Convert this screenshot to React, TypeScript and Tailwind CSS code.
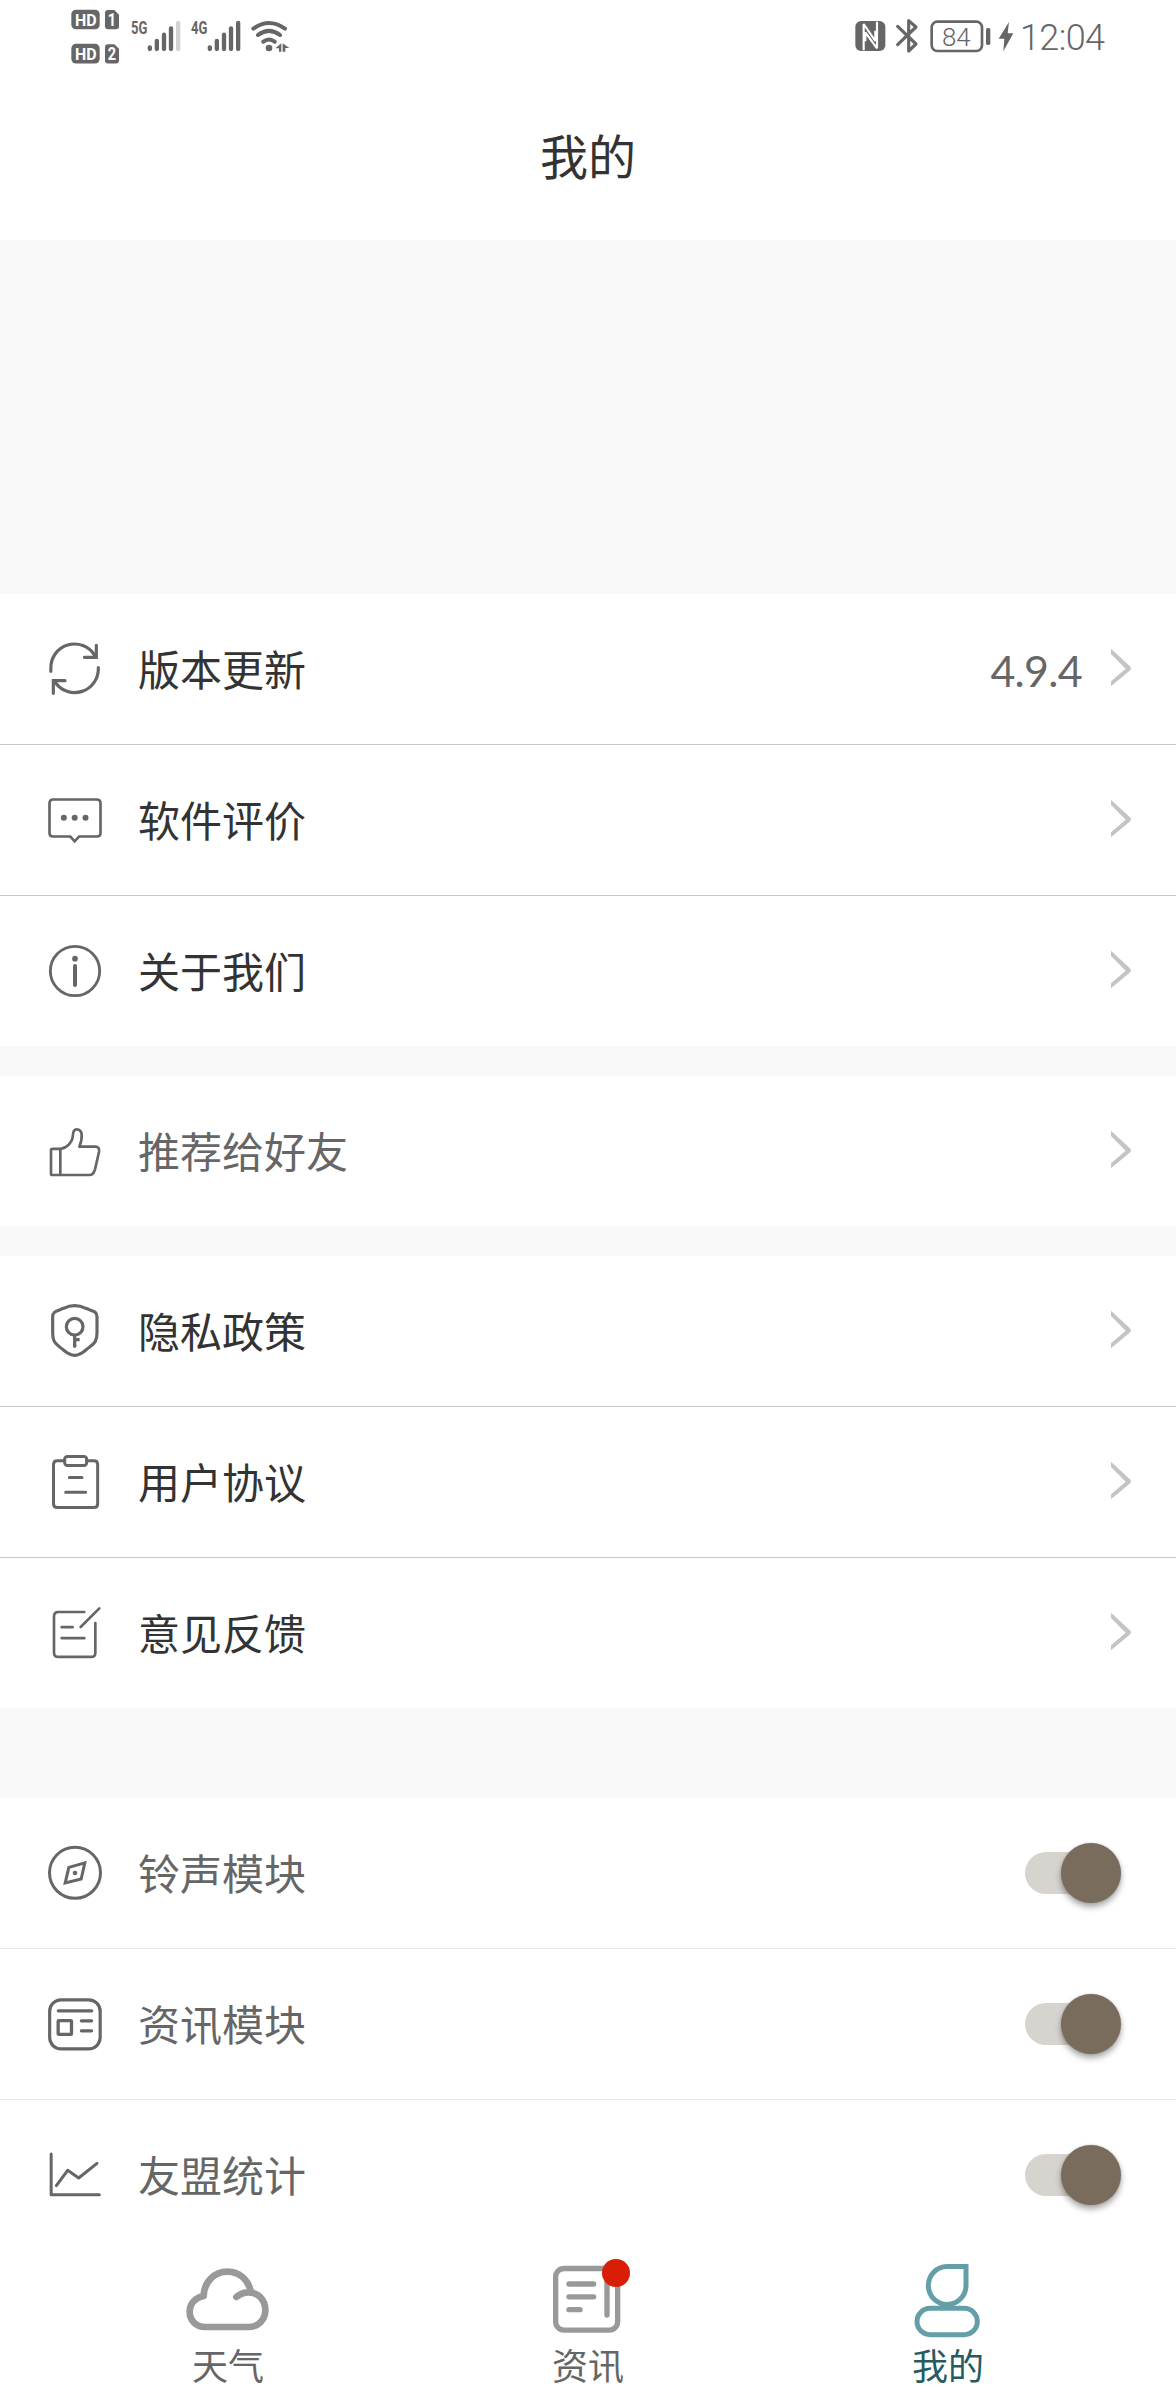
import type { ReactNode } from 'react';

function RowIcon({ box, w = 8, children }: { box: string; w?: number; children: ReactNode }) {
  return (
    <svg
      className="h-[60px] w-[60px] shrink-0 text-[#666]"
      viewBox={box}
      fill="none"
      stroke="currentColor"
      strokeWidth={w}
      strokeLinecap="round"
      strokeLinejoin="round"
    >
      {children}
    </svg>
  );
}

const icons: Record<string, ReactNode> = {
  update: (
    <RowIcon box="75 177 180 180" w={9.5}>
      <path d="M92.500 274V266A71 71 0 0 1 224 226M235 263V267A71 71 0 0 1 107 309" />
      <path d="M229 196V232H193M100 340V302H135" strokeLinejoin="miter" />
    </RowIcon>
  ),
  review: (
    <RowIcon box="75 630 180 180" w={8}>
      <path d="M100 658.500H230Q241.500 658.500 241.500 670V758Q241.500 769.500 230 769.500H177L164 784L151 769.500H100Q88.500 769.500 88.500 758V670Q88.500 658.500 100 658.500Z" strokeLinejoin="miter" />
      <g fill="currentColor" stroke="none">
        <circle cx="131.500" cy="713.500" r="9" />
        <circle cx="164" cy="713.500" r="9" />
        <circle cx="196.500" cy="713.500" r="9" />
      </g>
    </RowIcon>
  ),
  about: (
    <RowIcon box="75 1083 180 180" w={8.5}>
      <circle cx="165" cy="1173" r="74" />
      <path d="M165 1158V1215" strokeWidth="12" />
      <circle cx="165" cy="1136" r="8.500" fill="currentColor" stroke="none" />
    </RowIcon>
  ),
  share: (
    <RowIcon box="75 213 180 180" w={8}>
      <path d="M97 296.500H122C139 294 157 279 158.500 257C159 243 162 238 170 238C179 238 184 243 185 254C186 266 184 276 178 290H226C235 290 239 296 237 306L225 358C222 369 219 375 208 375H97Q93 375 93 371V300Q93 296.500 97 296.500Z" />
      <path d="M121 297V374" />
    </RowIcon>
  ),
  privacy: (
    <RowIcon box="75 753 180 180" w={9.5}>
      <path d="M164 767C178 767 187 770 197 775C218 783 231 783 231 801V850C231 872 224 880 208 892C190 905 184 916 164 916C144 916 138 905 120 892C104 880 98 872 98 850V801C98 783 111 783 131 775C141 770 150 767 164 767Z" />
      <circle cx="164" cy="830" r="25" />
      <path d="M164 855V890M164 869H179" strokeLinecap="butt" />
      <path d="M164 884V889" />
    </RowIcon>
  ),
  terms: (
    <RowIcon box="75 186 180 180" w={9}>
      <path d="M134 212.500H112Q100.500 212.500 100.500 224V341Q100.500 352.500 112 352.500H222Q233 352.500 233 341V224Q233 212.500 222 212.500H200" />
      <rect x="134" y="199.500" width="66" height="27" rx="8" />
      <path d="M148 262.500H186M137 306.500H197" />
    </RowIcon>
  ),
  feedback: (
    <RowIcon box="75 639 180 180" w={8}>
      <path d="M193 666H115Q102 666 102 679V788Q102 800.500 115 800.500H214Q226 800.500 226 788V699" />
      <path d="M182 711L238 655M125 711.500H158M125 744.500H193" />
    </RowIcon>
  ),
  ring: (
    <RowIcon box="75 189 180 180" w={9}>
      <circle cx="165" cy="278.500" r="76.500" />
      <path d="M194.500 248.500L146.500 262L135.500 309L183.500 297Z" strokeLinejoin="miter" strokeWidth="9" />
      <circle cx="165" cy="279" r="7" fill="currentColor" stroke="none" />
    </RowIcon>
  ),
  news: (
    <RowIcon box="75 642 180 180" w={9.5}>
      <rect x="89" y="659.500" width="151.500" height="147" rx="34" />
      <path d="M115 692.500H215" strokeWidth="10" />
      <rect x="114.500" y="722" width="40" height="41" rx="2" strokeWidth="10" />
      <path d="M184 722.500H215M184 752.500H215" />
    </RowIcon>
  ),
  stats: (
    <RowIcon box="75 1095 180 180" w={9}>
      <path d="M93.500 1122V1244H238M109 1217L143 1171L176 1194L231 1150" />
    </RowIcon>
  ),
};

function Chevron() {
  return (
    <svg className="h-[42px] w-[22px] text-[#c4c4c4]" viewBox="450 204 66 126" fill="currentColor">
      <path d="M453 206L509 258Q517 265 509 272L453 319V304L497 266L453 222Z" />
    </svg>
  );
}

function Switch() {
  return (
    <div className="relative mr-[11px] mb-px flex h-[60px] w-24 items-center">
      <div className="h-[42px] w-[84px] rounded-full bg-[#d7d3ce]" />
      <div className="absolute right-0 top-0 h-[60px] w-[60px] rounded-full bg-[#796c5c] shadow-[0_4px_6px_rgba(0,0,0,0.35),0_0_2px_rgba(0,0,0,0.2)]" />
    </div>
  );
}

type Item = { icon: string; label: string; value?: string; muted?: boolean; toggle?: boolean };

function Row({ icon, label, value, muted, toggle }: Item) {
  return (
    <div className="flex h-[150px] items-center pl-[45px] pr-11">
      {icons[icon]}
      <span className={`mb-0.5 ml-[33px] flex-1 text-[42px] leading-[60px] ${muted ? 'text-[#666]' : 'text-[#333]'}`}>
        {label}
      </span>
      {value && (
        <span className="mr-7 mt-1 font-['Lato'] text-[43px] leading-[60px] tracking-[-0.7px] text-[#666]">{value}</span>
      )}
      {toggle ? <Switch /> : <Chevron />}
    </div>
  );
}

function Group({ items, light }: { items: Item[]; light?: boolean }) {
  return (
    <section className={`divide-y bg-white ${light ? 'divide-[#e9e9e9]' : 'divide-[#c6c6c6]'}`}>
      {items.map((item) => (
        <div key={item.label}>
          <Row {...item} />
        </div>
      ))}
    </section>
  );
}

const condensed = { fontFamily: 'Roboto, sans-serif', fontWeight: 700 };

function Signal({ label, last }: { label: string; last: string }) {
  return (
    <svg className="h-[35px] w-[52px]" viewBox="240 54 156 105" fill="none" stroke="#666" strokeWidth="13" strokeLinecap="round">
      <text x="243" y="102" fontSize="56" textLength="49" lengthAdjust="spacingAndGlyphs" fill="#666" stroke="none" style={condensed}>
        {label}
      </text>
      <path d="M299.500 142V147M320.500 123V147M342 104V147M363 85V147" />
      <path d="M384.500 69V147" stroke={last} />
    </svg>
  );
}

function SimCards() {
  return (
    <svg className="h-14 w-[50px]" viewBox="60 24 150 168" fill="#666">
      {[0, 102.5].map((dy, i) => (
        <g key={dy} transform={`translate(0 ${dy})`}>
          <rect x="64" y="29" width="85" height="59" rx="14" />
          <text x="75" y="77" fontSize="52" textLength="65" lengthAdjust="spacingAndGlyphs" fill="#fff" style={condensed}>
            HD
          </text>
          <path d="M174 30H193L207 44V79Q207 88 198 88H174Q165 88 165 79V39Q165 30 174 30Z" />
          <text x="173" y="79" fontSize="54" textLength="25" lengthAdjust="spacingAndGlyphs" fill="#fff" style={condensed}>
            {i + 1}
          </text>
        </g>
      ))}
    </svg>
  );
}

function StatusBar() {
  return (
    <div className="flex h-[75px] items-start justify-between pl-[70px] pr-[70px] pt-2">
      <div className="flex">
        <SimCards />
        <div className="ml-2.5 mt-2.5 flex gap-2">
          <Signal label="5G" last="#d2d2d2" />
          <Signal label="4G" last="#666" />
          <svg className="h-[35px] w-10" viewBox="600 54 120 105" fill="none" stroke="#666" strokeWidth="12" strokeLinecap="round">
            <path d="M610 86Q657 52 705 86M624 105Q657 80 690 105M640 125Q657 112 674 125" />
            <circle cx="657" cy="144" r="10" fill="#666" stroke="none" />
            <path d="M676 145L694 130V155H687V145ZM698 130L718 144H706V155H698Z" fill="#666" stroke="none" />
          </svg>
        </div>
      </div>
      <div className="mt-2.5 flex h-9 items-center">
        <svg className="h-9 w-8" viewBox="45 54 96 108">
          <rect x="46" y="63" width="90" height="90" rx="17" fill="#666" />
          <path
            d="M71 151V72L106 123V92M111 65V145L76 97V124"
            fill="none"
            stroke="#fff"
            strokeWidth="6.500"
            strokeLinejoin="bevel"
          />
        </svg>
        <svg className="ml-2 h-9 w-6" viewBox="165 54 72 108" fill="none" stroke="#666" strokeWidth="9.500" strokeLinejoin="round" strokeLinecap="round">
          <path d="M173 79L228 132L206 153V62L228 81L173 134" />
        </svg>
        <svg className="ml-[11px] h-9 w-[62px]" viewBox="270 54 186 108">
          <rect x="275" y="65" width="151" height="88" rx="17" fill="none" stroke="#666" strokeWidth="8" />
          <rect x="438" y="84" width="13" height="51" rx="5" fill="#666" />
          <text x="306" y="137" fontSize="77" textLength="86" lengthAdjust="spacingAndGlyphs" fill="#666" style={{ fontFamily: 'Roboto, sans-serif', fontWeight: 300 }}>
            84
          </text>
        </svg>
        <svg className="ml-1.5 h-9 w-4" viewBox="474 54 48 108">
          <path d="M507 66L476 116H493L490 154L520 100H503Z" fill="#666" />
        </svg>
        <span className="ml-[6px] mt-1 w-[86px] whitespace-nowrap font-['Roboto'] text-[36px] font-light leading-9 tracking-[-0.6px] text-[#666]">
          12:04
        </span>
      </div>
    </div>
  );
}

function Tab({ label, active, children, dot }: { label: string; active?: boolean; dot?: boolean; children: ReactNode }) {
  return (
    <div className="flex w-[360px] flex-col items-center pt-2">
      <div className="relative">
        {children}
        {dot && <span className="absolute left-[64px] top-[1px] h-7 w-7 rounded-full bg-[#d81e06]" />}
      </div>
      <span className={`text-[36px] leading-[52px] ${active ? 'text-[#265c60]' : 'text-[#666]'}`}>{label}</span>
    </div>
  );
}

export default function App() {
  return (
    <div
      lang="zh-CN"
      className="flex h-[2400px] w-[1176px] flex-col overflow-hidden bg-[#f9f9f9] font-['Noto_Sans_CJK_SC',sans-serif]"
    >
      <header className="h-60 bg-white">
        <StatusBar />
        <h1 className="mt-11 text-center text-[48px] leading-[70px] text-[#333]">我的</h1>
      </header>

      <main className="mt-[354px] flex flex-col">
        <Group
          items={[
            { icon: 'update', label: '版本更新', value: '4.9.4' },
            { icon: 'review', label: '软件评价' },
            { icon: 'about', label: '关于我们' },
          ]}
        />
        <div className="my-[30px]">
          <Group items={[{ icon: 'share', label: '推荐给好友', muted: true }]} />
        </div>
        <Group
          items={[
            { icon: 'privacy', label: '隐私政策' },
            { icon: 'terms', label: '用户协议' },
            { icon: 'feedback', label: '意见反馈' },
          ]}
        />
        <div className="mt-[90px]">
          <Group
            light
            items={[
              { icon: 'ring', label: '铃声模块', muted: true, toggle: true },
              { icon: 'news', label: '资讯模块', muted: true, toggle: true },
              { icon: 'stats', label: '友盟统计', muted: true, toggle: true },
            ]}
          />
        </div>
      </main>

      <nav className="flex h-[150px] justify-center bg-white">
        <Tab label="天气">
          <svg className="h-20 w-[100px]" viewBox="84 84 300 240" fill="none" stroke="#999" strokeWidth="20" strokeLinecap="round">
            <path d="M161 198C162 156 193 125 232 125C267 125 295 148 302 184M161 198C137 202 119 220 119 245C119 271 139 291 164 291H296C325 291 346 269 346 240C346 210 324 187 296 187C281 187 270 192 259 201" />
          </svg>
        </Tab>
        <Tab label="资讯" dot>
          <svg className="h-20 w-[100px]" viewBox="54 84 300 240" fill="none" stroke="#999" strokeWidth="16" strokeLinecap="round">
            <rect x="107" y="115.500" width="186" height="185" rx="25" />
            <path d="M147 162H221M147 200.500H221M147 239H180M261 150V255" />
          </svg>
        </Tab>
        <Tab label="我的" active>
          <svg className="h-20 w-[100px]" viewBox="54 84 300 240" fill="none" stroke="#649ea8" strokeWidth="15">
            <path d="M201 109.500H258V166A56.500 57 0 1 1 201 109.500Z" />
            <rect x="111" y="235" width="181" height="79" rx="39.500" />
          </svg>
        </Tab>
      </nav>
    </div>
  );
}
